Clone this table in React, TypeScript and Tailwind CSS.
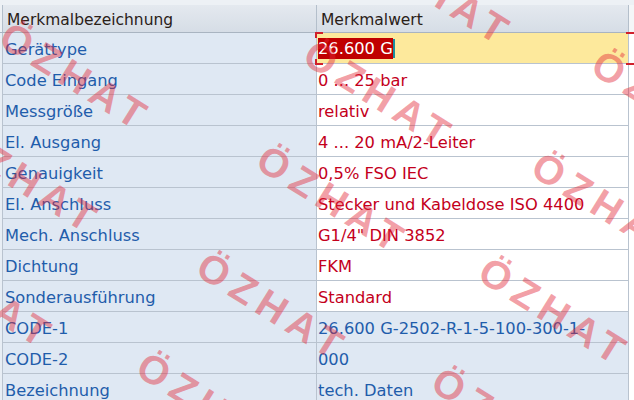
const rows = [
  { label: "Gerättype", value: "26.600 G", kind: "active" },
  { label: "Code Eingang", value: "0 ... 25 bar", kind: "edit" },
  { label: "Messgröße", value: "relativ", kind: "edit" },
  { label: "El. Ausgang", value: "4 ... 20 mA/2-Leiter", kind: "edit" },
  { label: "Genauigkeit", value: "0,5% FSO IEC", kind: "edit" },
  { label: "El. Anschluss", value: "Stecker und Kabeldose ISO 4400", kind: "edit" },
  { label: "Mech. Anschluss", value: 'G1/4" DIN 3852', kind: "edit" },
  { label: "Dichtung", value: "FKM", kind: "edit" },
  { label: "Sonderausführung", value: "Standard", kind: "edit" },
  { label: "CODE-1", value: "26.600 G-2502-R-1-5-100-300-1-", kind: "ro" },
  { label: "CODE-2", value: "000", kind: "ro" },
  { label: "Bezeichnung", value: "tech. Daten", kind: "ro" },
];

// centres of the "Ö" of each watermark
const marks = [
  [380, -45],
  [18, 40],
  [322, 58],
  [610, 68],
  [-32, 143],
  [275, 163],
  [550, 170],
  [-78, 258],
  [215, 270],
  [497, 275],
  [155, 370],
  [450, 385],
];

function ValueCell({ value, kind }: { value: string; kind: string }) {
  if (kind === "active") {
    return (
      <div className="flex items-center h-full bg-[#fde99c] pl-[1px]">
        <span className="bg-[#c00000] text-white leading-[21px]">{value}</span>
        <span className="w-[2px] h-[19px] bg-[#1a8fa0]" />
      </div>
    );
  }
  if (kind === "edit") {
    return (
      <div className="flex items-center h-full bg-white pl-[1px] pt-[4px] text-[#c4001c]">{value}</div>
    );
  }
  return <div className="flex items-center h-full pl-[1px] pt-[4px] text-[#1f5dab]">{value}</div>;
}

export default function App() {
  return (
    <div
      className="relative w-[634px] h-[400px] overflow-hidden bg-white text-[16.3px]"
      style={{ fontFamily: '"DejaVu Sans", Verdana, sans-serif' }}
    >
      <div className="h-[5px] bg-[#edf1f5]" />
      <div className="flex h-[28px] border-b border-[#a9b4c1] bg-gradient-to-b from-[#e4e9ef] to-[#d6dde6] text-[15.5px]">
        <div className="w-[2px] bg-[#edf1f5]" />
        <div className="w-[315px] border-l border-r border-[#b4bfcb] pl-[4px] pt-[4px] flex items-center text-[#2a2018]">
          Merkmalbezeichnung
        </div>
        <div className="w-[312px] border-r border-[#b4bfcb] pl-[4px] pt-[4px] flex items-center text-[#2a2018]">
          Merkmalwert
        </div>
        <div className="flex-1 bg-[#f4f6f8]" />
      </div>
      {rows.map((r) => (
        <div key={r.label} className="flex h-[31px]">
          <div className="w-[2px] bg-[#e8eef5]" />
          <div className="w-[315px] border-l border-r border-b border-[#b9c3cf] bg-[#dfe8f3] pl-[2px] pt-[4px] flex items-center text-[#1f5dab]">
            {r.label}
          </div>
          <div className="w-[312px] border-r border-b border-[#b9c3cf] bg-[#dfe8f3]">
            <ValueCell value={r.value} kind={r.kind} />
          </div>
          <div className="flex-1 bg-white" />
        </div>
      ))}

      {/* focus brackets around the active cell */}
      <div className="absolute left-[315px] top-[32px] w-[8px] h-[2px] bg-[#d0202c]" />
      <div className="absolute left-[315px] top-[32px] w-[2px] h-[6px] bg-[#d0202c]" />
      <div className="absolute left-[315px] top-[63px] w-[8px] h-[2px] bg-[#d0202c]" />
      <div className="absolute left-[315px] top-[59px] w-[2px] h-[6px] bg-[#d0202c]" />
      <div className="absolute left-[626px] top-[32px] w-[8px] h-[2px] bg-[#d0202c]" />
      <div className="absolute left-[626px] top-[63px] w-[8px] h-[2px] bg-[#d0202c]" />

      {/* watermark */}
      <div className="absolute inset-0 pointer-events-none">
        {marks.map(([x, y]) => (
          <span
            key={`${x}-${y}`}
            className="absolute origin-left rotate-[32deg] text-[40px] leading-[40px] font-bold tracking-[7px] whitespace-nowrap text-[rgba(226,40,56,0.44)]"
            style={{ left: x - 14, top: y - 28, fontFamily: '"Liberation Sans", Arial, sans-serif' }}
          >
            ÖZHAT
          </span>
        ))}
      </div>
    </div>
  );
}
